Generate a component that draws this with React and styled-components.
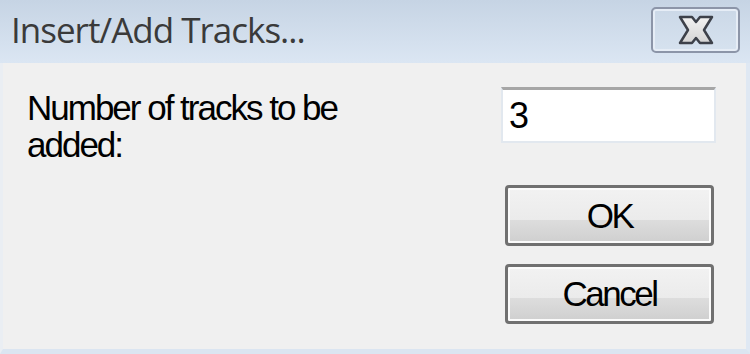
import styled, { createGlobalStyle } from 'styled-components';

const Global = createGlobalStyle`
  html, body {
    margin: 0;
    padding: 0;
    background: #f0f0f0;
  }
`;

const Window = styled.div`
  width: 750px;
  height: 354px;
  display: flex;
  flex-direction: column;
  overflow: hidden;
  font-family: "Liberation Sans", Arial, sans-serif;
`;

const TitleBar = styled.div`
  height: 63px;
  flex-shrink: 0;
  display: flex;
  align-items: center;
  justify-content: space-between;
  padding: 0 10px 0 11px;
  box-sizing: border-box;
  background: linear-gradient(#c6d4e4, #dbe6f3);
`;

const Title = styled.span`
  font-family: "Open Sans", "Noto Sans", sans-serif;
  font-size: 35px;
  letter-spacing: -1px;
  color: #3a3a3a;
  margin-top: -4px;
`;

const CloseButton = styled.button`
  width: 89px;
  height: 46px;
  margin-top: -3px;
  padding: 0;
  display: flex;
  align-items: center;
  justify-content: center;
  border: 2px solid #8c95a8;
  border-radius: 5px;
  box-shadow: inset 0 0 0 2px #e6edf6;
  background: linear-gradient(#cbd8e7, #d6e2ef);
`;

const Body = styled.div`
  flex: 1;
  display: grid;
  grid-template-columns: 1fr 211px;
  padding: 24px 32px 0 24px;
  background: #f0f0f0;
  border-left: 3px solid #eaeef3;
  border-right: 4px solid #dfe8f3;
  border-bottom: 5px solid #dbe5f1;
  box-sizing: border-box;
`;

const Label = styled.div`
  font-size: 35px;
  line-height: 37px;
  letter-spacing: -2px;
  color: #000;
  margin-top: 2px;
`;

const Side = styled.div`
  display: flex;
  flex-direction: column;
  align-items: flex-end;
`;

const Field = styled.input`
  width: 215px;
  height: 56px;
  margin-right: -2px;
  box-sizing: border-box;
  border: 2px solid #e2e8ef;
  border-top: 3px solid #a6a6a6;
  background: #fff;
  padding: 0 0 0 6px;
  font-family: inherit;
  font-size: 36px;
  color: #000;
  outline: none;
`;

const Button = styled.button`
  width: 209px;
  height: ${p => p.$h}px;
  margin-top: ${p => p.$top}px;
  box-sizing: border-box;
  border: 3px solid #707070;
  border-radius: 4px;
  box-shadow: inset 0 0 0 2px #fbfbfb;
  background: linear-gradient(#f2f2f2 0%, #ebebeb 58%, #dddddd 58%, #cfcfcf 100%);
  font-family: inherit;
  font-size: 35px;
  letter-spacing: -2.5px;
  color: #000;
  padding: 0;
`;

function CloseGlyph() {
  return (
    <svg width="36" height="30" viewBox="-2 -2 36 30">
      <defs>
        <linearGradient id="xfill" x1="0" y1="0" x2="0" y2="1">
          <stop offset="0" stopColor="#f2f2f2" />
          <stop offset="1" stopColor="#d4d4d4" />
        </linearGradient>
      </defs>
      <polygon
        points="0,0 12,0 16,5 20,0 32,0 24,13 32,26 20,26 16,21 12,26 0,26 8,13"
        fill="url(#xfill)"
        stroke="#3d414a"
        strokeWidth="2.5"
        strokeLinejoin="round"
      />
    </svg>
  );
}

export default function App() {
  return (
    <>
      <Global />
      <Window>
        <TitleBar>
          <Title>Insert/Add Tracks...</Title>
          <CloseButton aria-label="Close">
            <CloseGlyph />
          </CloseButton>
        </TitleBar>
        <Body>
          <Label>
            Number of tracks to be
            <br />
            added:
          </Label>
          <Side>
            <Field defaultValue="3" />
            <Button $h={61} $top={42}>OK</Button>
            <Button $h={60} $top={18}>Cancel</Button>
          </Side>
        </Body>
      </Window>
    </>
  );
}
